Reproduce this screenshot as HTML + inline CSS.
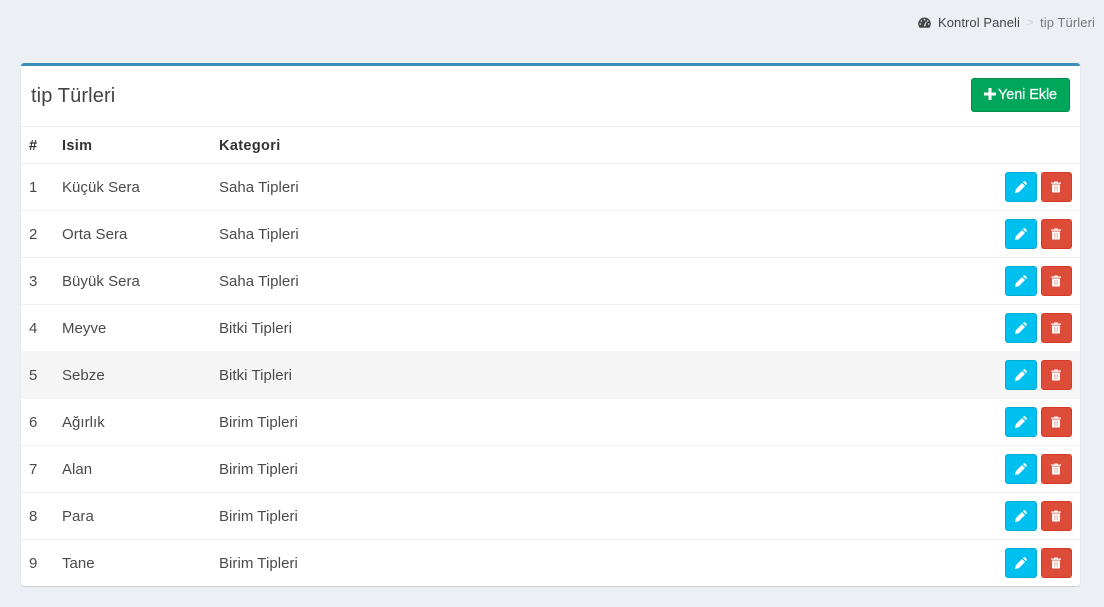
<!DOCTYPE html>
<html lang="tr"><head><meta charset="utf-8"><title>tip Türleri</title>
<style>
html,body{margin:0;padding:0;width:1104px;height:607px;overflow:hidden;background:#ecf0f5;font-family:"Liberation Sans",sans-serif;color:#444}
.a{position:absolute;white-space:nowrap}
#box{position:absolute;left:21px;top:63px;width:1059px;height:523px;background:#fff;border-radius:3px;box-shadow:0 1px 1px rgba(0,0,0,.15)}
#top{position:absolute;left:21px;top:63px;width:1059px;height:3px;background:#3c8dbc;border-radius:3px 3px 0 0}
.l{position:absolute;left:21px;width:1059px;height:1px;background:#f1f1f1}
.t{font-size:15px;line-height:20px;letter-spacing:.04px;color:#4a4a4a;margin-top:1px}
.h{font-size:14.5px;line-height:20px;font-weight:bold;color:#333;letter-spacing:.35px;margin-top:1px}
.b{position:absolute;width:32px;height:30px;box-sizing:border-box;border-radius:3px}
.e{left:1005px;background:#00c0ef;border:1px solid #00acd6}
.d{left:1041px;width:31px;background:#dd4b39;border:1px solid #d73925}
.b svg{position:absolute;top:50%;transform:translateY(-50%)}
.e svg{left:9px}
.d svg{left:9px}
</style></head><body>
<svg width="0" height="0" style="position:absolute"><defs>
<symbol id="pen" viewBox="0 0 12 12"><path d="M0 12l.8-3.800L7 2l3 3-6.200 6.200zM7.900 1.100l.7-.7c.4-.4 1-.4 1.400 0l1.600 1.600c.4.400.4 1 0 1.400l-.7.700z" fill="#fff"/></symbol>
<symbol id="trash" viewBox="0 0 10 11"><path d="M3.500 0h3l.5 1h3v1.200H0V1h3zM1 3h8v7c0 .6-.4 1-1 1H2c-.6 0-1-.4-1-1z" fill="#fff"/><path d="M3.300 4.500v5M5 4.500v5M6.700 4.500v5" stroke="#eea69c" stroke-width=".7"/></symbol>
</defs></svg>
<div class="a" style="left:918px;top:17px;width:14px;height:12px">
<svg width="13" height="12" viewBox="0 0 13 12" style="display:block"><path d="M6.500 .5A6.300 6.300 0 0 0 .2 6.800c0 1.300.4 2.500 1.100 3.500.2.300.5.500.8.500h8.800c.3 0 .6-.2.800-.5.700-1 1.100-2.200 1.100-3.500A6.300 6.300 0 0 0 6.500 .5z" fill="#444"/><circle cx="6.500" cy="2.600" r=".8" fill="#ecf0f5"/><circle cx="3.400" cy="4" r=".8" fill="#ecf0f5"/><circle cx="2.300" cy="7" r=".8" fill="#ecf0f5"/><circle cx="10.700" cy="7" r=".8" fill="#ecf0f5"/><circle cx="9.600" cy="4" r=".8" fill="#ecf0f5"/><path d="M5.800 9l2-4.400.8.300L7.200 9.400z" fill="#ecf0f5"/></svg></div>
<div class="a" style="left:938px;top:13px;font-size:13px;line-height:20px;color:#444;letter-spacing:.07px">Kontrol Paneli</div>
<div class="a" style="left:1027px;top:14px;font-size:11px;line-height:18px;color:#ccc">&gt;</div>
<div class="a" style="left:1040px;top:13px;font-size:13px;line-height:20px;color:#777;letter-spacing:.1px">tip Türleri</div>
<div id="box"></div><div id="top"></div>
<div class="a" style="left:31px;top:84px;font-size:20px;line-height:24px;color:#444;letter-spacing:.12px">tip Türleri</div>
<div class="a" style="left:971px;top:78px;width:99px;height:34px;box-sizing:border-box;background:#00a65a;border:1px solid #008d4c;border-radius:3px"></div>
<svg class="a" style="left:984px;top:88px" width="12" height="12" viewBox="0 0 12 12"><path d="M4.500 0h3v4.500H12v3H7.500V12h-3V7.500H0v-3h4.500z" fill="#fff"/></svg>
<div class="a" style="left:998px;top:85px;font-size:14.5px;line-height:20px;color:#fff;letter-spacing:-.1px;-webkit-text-stroke:.2px #fff">Yeni Ekle</div>
<div class="l" style="top:126px"></div><div class="l" style="top:163px"></div><div class="l" style="top:210px"></div><div class="l" style="top:257px"></div><div class="l" style="top:304px"></div><div class="l" style="top:351px"></div><div class="l" style="top:398px"></div><div class="l" style="top:445px"></div><div class="l" style="top:492px"></div><div class="l" style="top:539px"></div>
<div class="a" style="left:21px;top:351px;width:1059px;height:48px;background:#f5f5f5"></div>
<div class="a h" style="left:29px;top:135px">#</div><div class="a h" style="left:62px;top:135px">Isim</div><div class="a h" style="left:219px;top:135px">Kategori</div>

<div class="a t" style="left:29px;top:177px">1</div><div class="a t" style="left:62px;top:177px">Küçük Sera</div><div class="a t" style="left:219px;top:177px">Saha Tipleri</div>
<div class="a t" style="left:29px;top:224px">2</div><div class="a t" style="left:62px;top:224px">Orta Sera</div><div class="a t" style="left:219px;top:224px">Saha Tipleri</div>
<div class="a t" style="left:29px;top:271px">3</div><div class="a t" style="left:62px;top:271px">Büyük Sera</div><div class="a t" style="left:219px;top:271px">Saha Tipleri</div>
<div class="a t" style="left:29px;top:318px">4</div><div class="a t" style="left:62px;top:318px">Meyve</div><div class="a t" style="left:219px;top:318px">Bitki Tipleri</div>
<div class="a t" style="left:29px;top:365px">5</div><div class="a t" style="left:62px;top:365px">Sebze</div><div class="a t" style="left:219px;top:365px">Bitki Tipleri</div>
<div class="a t" style="left:29px;top:412px">6</div><div class="a t" style="left:62px;top:412px">Ağırlık</div><div class="a t" style="left:219px;top:412px">Birim Tipleri</div>
<div class="a t" style="left:29px;top:459px">7</div><div class="a t" style="left:62px;top:459px">Alan</div><div class="a t" style="left:219px;top:459px">Birim Tipleri</div>
<div class="a t" style="left:29px;top:506px">8</div><div class="a t" style="left:62px;top:506px">Para</div><div class="a t" style="left:219px;top:506px">Birim Tipleri</div>
<div class="a t" style="left:29px;top:553px">9</div><div class="a t" style="left:62px;top:553px">Tane</div><div class="a t" style="left:219px;top:553px">Birim Tipleri</div>

<div class="b e" style="top:172px"><svg width="12" height="12"><use href="#pen"/></svg></div><div class="b d" style="top:172px"><svg width="10" height="11"><use href="#trash"/></svg></div>
<div class="b e" style="top:219px"><svg width="12" height="12"><use href="#pen"/></svg></div><div class="b d" style="top:219px"><svg width="10" height="11"><use href="#trash"/></svg></div>
<div class="b e" style="top:266px"><svg width="12" height="12"><use href="#pen"/></svg></div><div class="b d" style="top:266px"><svg width="10" height="11"><use href="#trash"/></svg></div>
<div class="b e" style="top:313px"><svg width="12" height="12"><use href="#pen"/></svg></div><div class="b d" style="top:313px"><svg width="10" height="11"><use href="#trash"/></svg></div>
<div class="b e" style="top:360px"><svg width="12" height="12"><use href="#pen"/></svg></div><div class="b d" style="top:360px"><svg width="10" height="11"><use href="#trash"/></svg></div>
<div class="b e" style="top:407px"><svg width="12" height="12"><use href="#pen"/></svg></div><div class="b d" style="top:407px"><svg width="10" height="11"><use href="#trash"/></svg></div>
<div class="b e" style="top:454px"><svg width="12" height="12"><use href="#pen"/></svg></div><div class="b d" style="top:454px"><svg width="10" height="11"><use href="#trash"/></svg></div>
<div class="b e" style="top:501px"><svg width="12" height="12"><use href="#pen"/></svg></div><div class="b d" style="top:501px"><svg width="10" height="11"><use href="#trash"/></svg></div>
<div class="b e" style="top:548px"><svg width="12" height="12"><use href="#pen"/></svg></div><div class="b d" style="top:548px"><svg width="10" height="11"><use href="#trash"/></svg></div>
</body></html>
